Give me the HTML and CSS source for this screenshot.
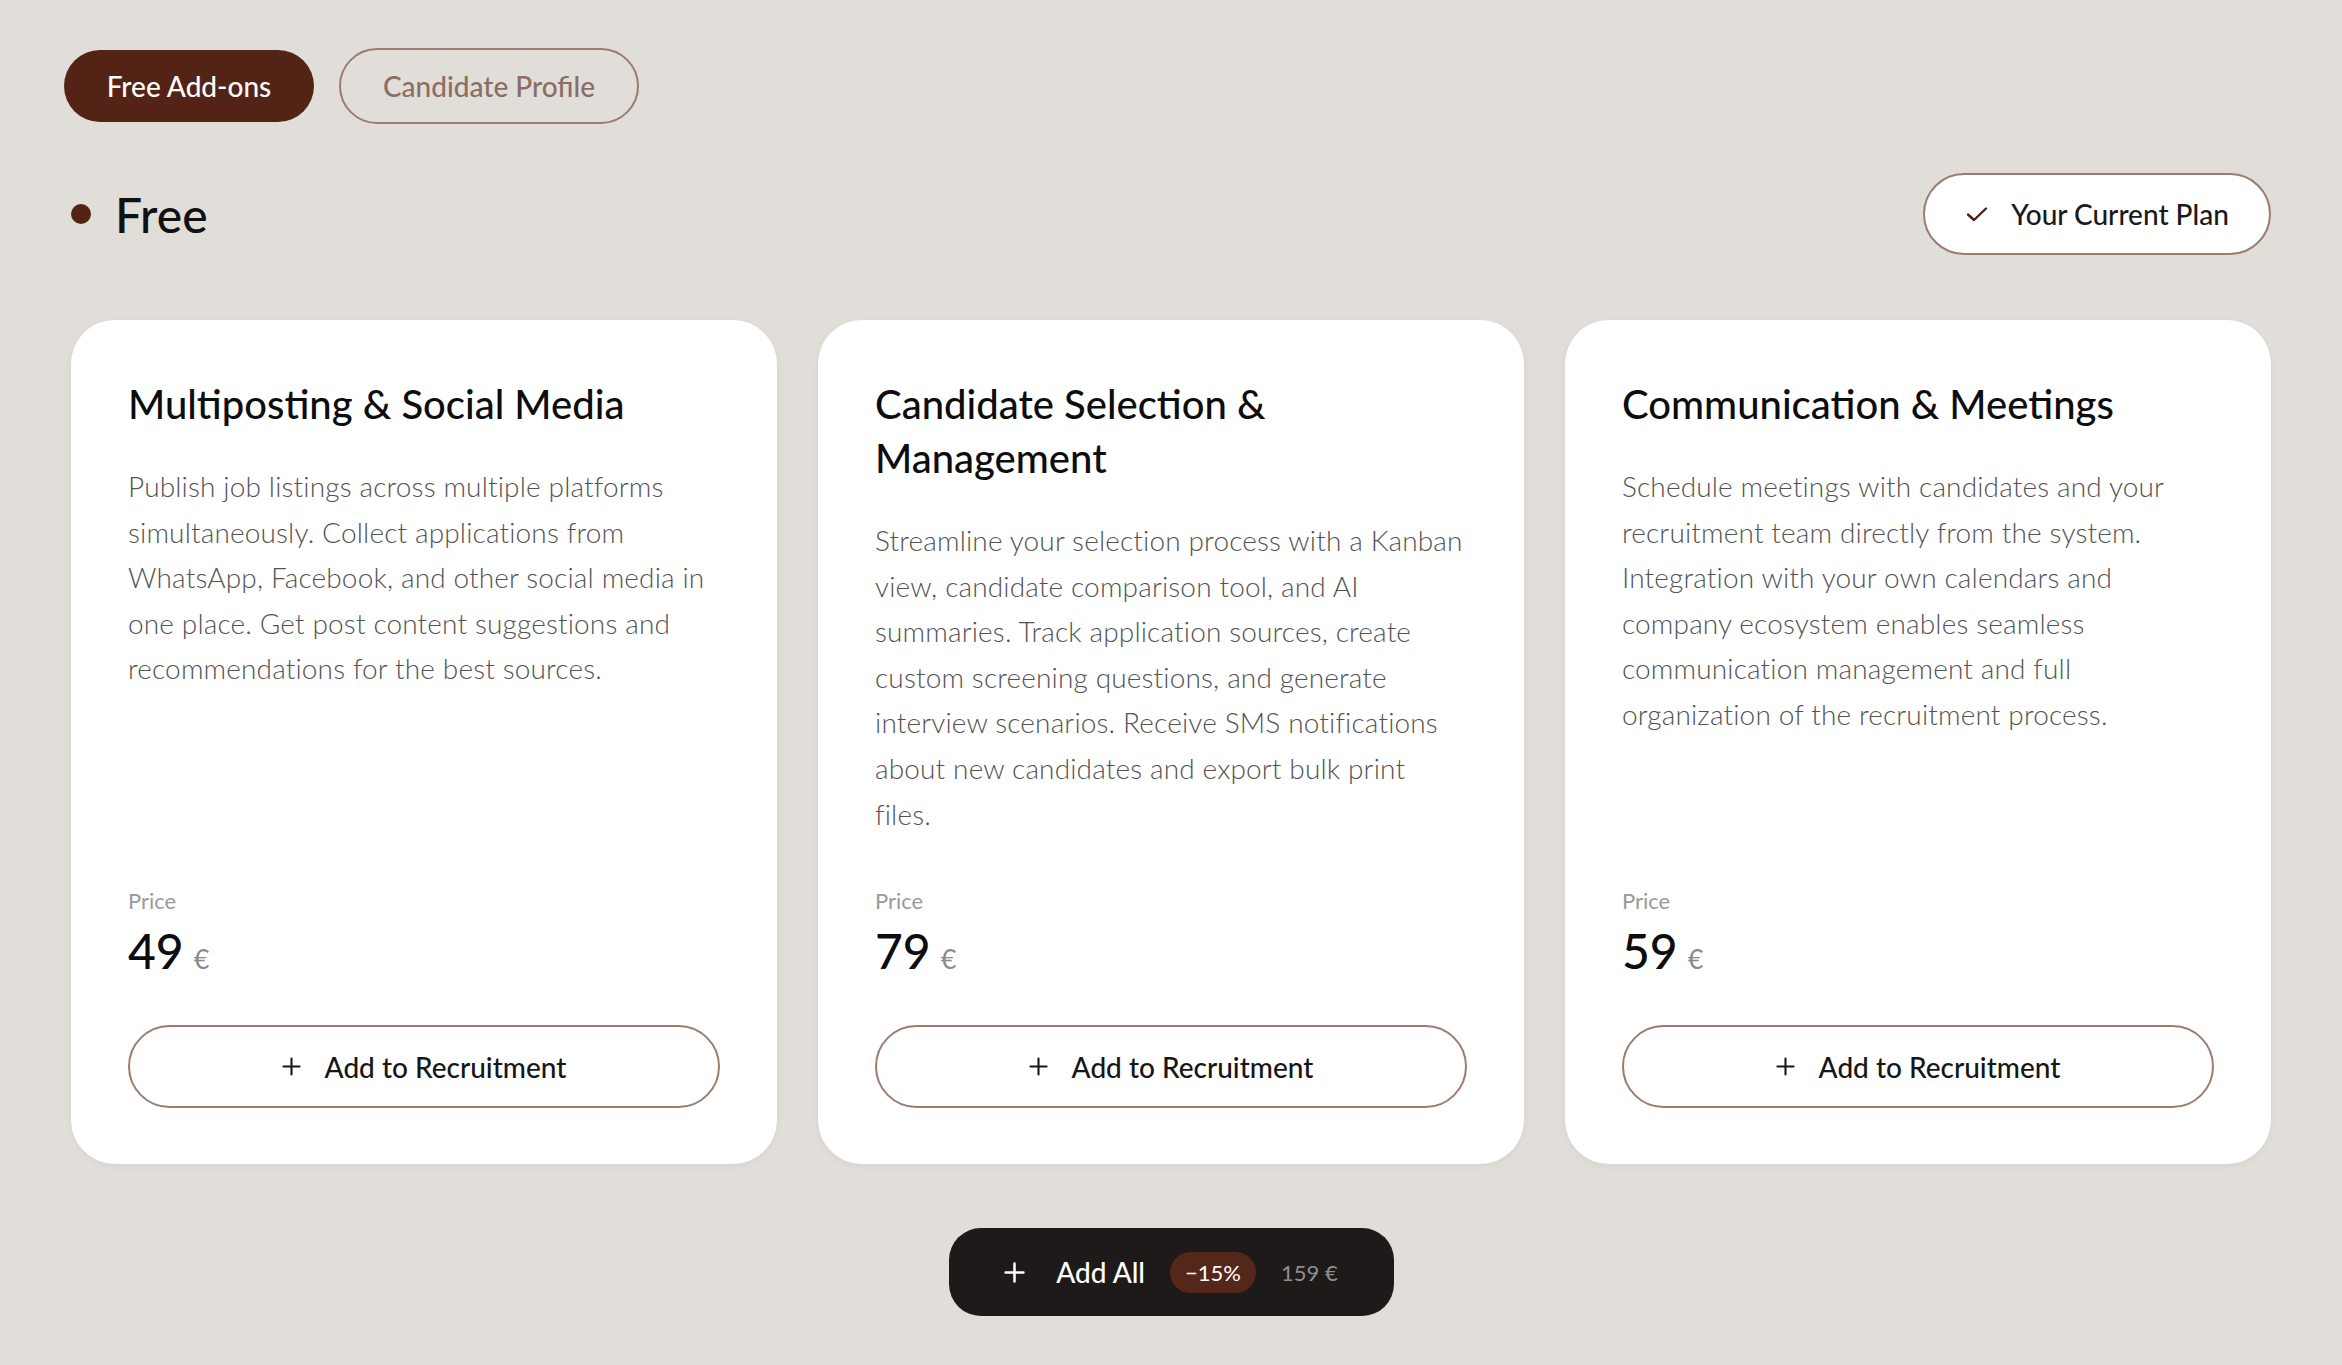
FILE: index.html
```html
<!DOCTYPE html>
<html lang="en">
<head>
<meta charset="utf-8">
<title>Add-ons</title>
<link rel="stylesheet" href="styles.css">
</head>
<body>
<main class="page">
  <nav class="tabs">
    <button class="tab tab-active">Free Add-ons</button>
    <button class="tab tab-outline">Candidate Profile</button>
  </nav>

  <header class="plan-row">
    <div class="plan-name"><span class="plan-dot"></span>Free</div>
    <button class="current-plan">
      <svg class="check" viewBox="0 0 24 24" width="24" height="24" aria-hidden="true">
        <path d="M3 12.5 L9 18 L21 6.5" fill="none" stroke="currentColor" stroke-width="2.4" stroke-linecap="round" stroke-linejoin="round"/>
      </svg>
      Your Current Plan
    </button>
  </header>

  <section class="cards">
    <article class="card">
      <h2 class="card-title">Multiposting &amp; Social Media</h2>
      <p class="card-text">Publish job listings across multiple platforms simultaneously. Collect applications from WhatsApp, Facebook, and other social media in one place. Get post content suggestions and recommendations for the best sources.</p>
      <div class="price">
        <div class="price-label">Price</div>
        <div class="price-value">49<span class="currency">€</span></div>
      </div>
      <button class="add-btn">
        <svg class="plus" viewBox="0 0 20 20" width="19" height="19" aria-hidden="true">
          <path d="M10 1.5 V18.5 M1.5 10 H18.5" stroke="currentColor" stroke-width="2.2" stroke-linecap="round"/>
        </svg>
        Add to Recruitment
      </button>
    </article>

    <article class="card">
      <h2 class="card-title">Candidate Selection &amp; Management</h2>
      <p class="card-text">Streamline your selection process with a Kanban view, candidate comparison tool, and AI summaries. Track application sources, create custom screening questions, and generate interview scenarios. Receive SMS notifications about new candidates and export bulk print files.</p>
      <div class="price">
        <div class="price-label">Price</div>
        <div class="price-value">79<span class="currency">€</span></div>
      </div>
      <button class="add-btn">
        <svg class="plus" viewBox="0 0 20 20" width="19" height="19" aria-hidden="true">
          <path d="M10 1.5 V18.5 M1.5 10 H18.5" stroke="currentColor" stroke-width="2.2" stroke-linecap="round"/>
        </svg>
        Add to Recruitment
      </button>
    </article>

    <article class="card">
      <h2 class="card-title">Communication &amp; Meetings</h2>
      <p class="card-text">Schedule meetings with candidates and your recruitment team directly from the system. Integration with your own calendars and company ecosystem enables seamless communication management and full organization of the recruitment process.</p>
      <div class="price">
        <div class="price-label">Price</div>
        <div class="price-value">59<span class="currency">€</span></div>
      </div>
      <button class="add-btn">
        <svg class="plus" viewBox="0 0 20 20" width="19" height="19" aria-hidden="true">
          <path d="M10 1.5 V18.5 M1.5 10 H18.5" stroke="currentColor" stroke-width="2.2" stroke-linecap="round"/>
        </svg>
        Add to Recruitment
      </button>
    </article>
  </section>

  <div class="bundle-row">
    <button class="add-all">
      <svg class="plus plus-light" viewBox="0 0 20 20" width="21" height="21" aria-hidden="true">
        <path d="M10 1.5 V18.5 M1.5 10 H18.5" stroke="currentColor" stroke-width="2.4" stroke-linecap="round"/>
      </svg>
      <span class="add-all-label">Add All</span>
      <span class="discount">−15%</span>
      <span class="bundle-price">159 €</span>
    </button>
  </div>
</main>
</body>
</html>
```

FILE: styles.css
```css
* {
  box-sizing: border-box;
}

html, body {
  margin: 0;
  padding: 0;
}

body {
  background: #e1deda;
  font-family: "Lato", "Inter", "Liberation Sans", sans-serif;
  color: #121212;
}

button {
  font-family: inherit;
  cursor: pointer;
}

.page {
  padding: 48px 71px 0;
}

/* top tabs */
.tabs {
  display: flex;
  align-items: center;
  gap: 25px;
  margin-left: -7px;
  height: 76px;
}

.tab {
  border-radius: 40px;
  font-size: 28px;
  font-weight: 500;
  padding: 0;
}

.tab-active {
  width: 250px;
  height: 72px;
  background: #532416;
  color: #ffffff;
  border: none;
}

.tab-outline {
  width: 300px;
  height: 76px;
  background: transparent;
  color: #8c6d63;
  border: 2px solid #9c7b71;
}

/* plan heading */
.plan-row {
  display: flex;
  align-items: center;
  justify-content: space-between;
  margin-top: 49px;
  height: 82px;
}

.plan-name {
  display: flex;
  align-items: center;
  gap: 24px;
  font-size: 48px;
  font-weight: 500;
  color: #111111;
}

.plan-dot {
  width: 20px;
  height: 20px;
  border-radius: 50%;
  background: #532416;
}

.current-plan {
  display: flex;
  align-items: center;
  justify-content: center;
  gap: 22px;
  width: 348px;
  height: 82px;
  background: #ffffff;
  border: 2px solid #9c7b71;
  border-radius: 41px;
  font-size: 28px;
  font-weight: 500;
  color: #1a1a1a;
  padding: 0;
}

.check {
  color: #4a2016;
  width: 24px;
  height: 24px;
}

/* add-on cards */
.cards {
  display: grid;
  grid-template-columns: repeat(3, 1fr);
  gap: 41px;
  margin-top: 65px;
}

.card {
  display: flex;
  flex-direction: column;
  height: 844px;
  background: #ffffff;
  border-radius: 44px;
  padding: 57px 57px 56px;
  box-shadow: 0 2px 6px rgba(60, 40, 30, 0.06);
}

.card-title {
  margin: 0;
  font-size: 40px;
  line-height: 54px;
  font-weight: 500;
  color: #0d0d0d;
}

.card-text {
  margin: 33px 0 0;
  font-size: 28px;
  line-height: 45.6px;
  letter-spacing: 0.15px;
  font-weight: 300;
  color: #535353;
}

.price {
  margin-top: auto;
}

.price-label {
  font-size: 22px;
  line-height: 30px;
  color: #9a9a9a;
}

.price-value {
  margin-top: 7px;
  font-size: 48px;
  line-height: 56px;
  font-weight: 500;
  color: #0d0d0d;
}

.currency {
  margin-left: 10px;
  font-size: 27px;
  font-weight: 400;
  color: #8a8a8a;
}

.add-btn {
  display: flex;
  align-items: center;
  justify-content: center;
  gap: 24px;
  margin-top: 38px;
  height: 83px;
  width: 100%;
  background: #ffffff;
  border: 2px solid #9c7b71;
  border-radius: 42px;
  font-size: 28px;
  font-weight: 500;
  color: #161616;
  padding: 0;
}

.plus {
  color: #161616;
  flex: none;
}

/* bundle button */
.bundle-row {
  display: flex;
  justify-content: center;
  margin-top: 64px;
}

.add-all {
  display: flex;
  align-items: center;
  justify-content: center;
  width: 445px;
  height: 88px;
  background: #1d1a19;
  border: none;
  border-radius: 32px;
  padding: 0;
  color: #ffffff;
}

.plus-light {
  color: #ffffff;
}

.add-all-label {
  margin-left: 31px;
  font-size: 28px;
  font-weight: 500;
}

.discount {
  margin-left: 25px;
  width: 86px;
  height: 41px;
  line-height: 41px;
  border-radius: 21px;
  background: #55261a;
  color: #ffffff;
  font-size: 22px;
  font-weight: 400;
  text-align: center;
}

.bundle-price {
  margin-left: 25px;
  font-size: 22px;
  font-weight: 400;
  color: #8f8f8f;
}
```
